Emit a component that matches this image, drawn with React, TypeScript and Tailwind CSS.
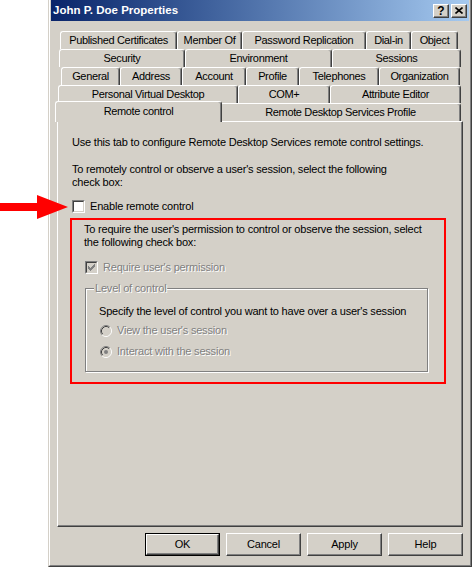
import React from 'react';

interface TabDef {
  label: string;
  w: number;
  selected?: boolean;
}

interface TabRow {
  offset: string;
  tabs: TabDef[];
}

const tabRows: TabRow[] = [
  {
    offset: 'ml-[3px]',
    tabs: [
      { label: 'Published Certificates', w: 117 },
      { label: 'Member Of', w: 65 },
      { label: 'Password Replication', w: 124 },
      { label: 'Dial-in', w: 45 },
      { label: 'Object', w: 47 },
    ],
  },
  {
    offset: 'ml-[2px]',
    tabs: [
      { label: 'Security', w: 126 },
      { label: 'Environment', w: 147 },
      { label: 'Sessions', w: 129 },
    ],
  },
  {
    offset: 'ml-[4px]',
    tabs: [
      { label: 'General', w: 59 },
      { label: 'Address', w: 62 },
      { label: 'Account', w: 64 },
      { label: 'Profile', w: 53 },
      { label: 'Telephones', w: 80 },
      { label: 'Organization', w: 81 },
    ],
  },
  {
    offset: 'ml-[1px]',
    tabs: [
      { label: 'Personal Virtual Desktop', w: 180 },
      { label: 'COM+', w: 92 },
      { label: 'Attribute Editor', w: 131 },
    ],
  },
  {
    offset: 'ml-0',
    tabs: [
      { label: 'Remote control', w: 163, selected: true },
      { label: 'Remote Desktop Services Profile', w: 241 },
    ],
  },
];

const disabledText = 'text-[#808080] [text-shadow:1px_1px_0_#ffffff]';

const Tab = ({ label, w, selected }: TabDef) => (
  <div
    style={{ width: selected ? w + 4 : w }}
    className={`flex shrink-0 items-center justify-center whitespace-nowrap rounded-t-[3px] border-l border-r border-t border-l-white border-r-[#404040] border-t-white bg-[#d4d0c8] shadow-[inset_-1px_0_0_#808080] ${
      selected ? 'relative z-10 -mx-[2px] -mt-[2px] h-[21px] pb-[2px]' : 'h-[18px]'
    }`}
  >
    {label}
  </div>
);

const CheckBox = ({ checked, disabled }: { checked?: boolean; disabled?: boolean }) => (
  <div className="h-[13px] w-[13px] shrink-0 border border-b-white border-l-[#808080] border-r-white border-t-[#808080]">
    <div
      className={`flex h-full w-full items-center justify-center border border-b-[#d4d0c8] border-l-[#404040] border-r-[#d4d0c8] border-t-[#404040] ${
        disabled ? 'bg-[#d4d0c8]' : 'bg-white'
      }`}
    >
      {checked && (
        <svg width="7" height="7" viewBox="0 0 7 7" shapeRendering="crispEdges">
          {[2, 3, 4, 3, 2, 1, 0].map((y, x) => (
            <rect key={x} x={x} y={y} width="1" height="3" fill={disabled ? '#808080' : '#000'} />
          ))}
        </svg>
      )}
    </div>
  </div>
);

const Radio = ({ checked }: { checked?: boolean }) => (
  <svg width="12" height="12" viewBox="0 0 12 12" className="shrink-0">
    <circle cx="6" cy="6" r="5.5" fill="#d4d0c8" />
    <path d="M2.11 9.89 A5.5 5.5 0 0 1 9.89 2.11" stroke="#808080" fill="none" />
    <path d="M9.89 2.11 A5.5 5.5 0 0 1 2.11 9.89" stroke="#ffffff" fill="none" />
    <path d="M2.82 9.18 A4.5 4.5 0 0 1 9.18 2.82" stroke="#404040" fill="none" />
    <path d="M9.18 2.82 A4.5 4.5 0 0 1 2.82 9.18" stroke="#d4d0c8" fill="none" />
    {checked && <circle cx="6" cy="6" r="2" fill="#808080" />}
  </svg>
);

const Button = ({ label, isDefault }: { label: string; isDefault?: boolean }) => (
  <div className={`h-[23px] w-[75px] ${isDefault ? 'border border-black' : ''}`}>
    <div className="flex h-full w-full items-center justify-center border border-b-[#404040] border-l-white border-r-[#404040] border-t-white bg-[#d4d0c8] shadow-[inset_-1px_-1px_0_#808080]">
      {label}
    </div>
  </div>
);

const TitleButton = ({ children }: { children: React.ReactNode }) => (
  <div className="flex h-[14px] w-[16px] items-center justify-center border border-b-[#404040] border-l-white border-r-[#404040] border-t-white bg-[#d4d0c8] shadow-[inset_-1px_-1px_0_#808080]">
    {children}
  </div>
);

export default function App() {
  return (
    <div className="relative h-[567px] w-[472px] overflow-hidden bg-white font-['Liberation_Sans',Arial,sans-serif] text-[11px] leading-[13px] tracking-[-0.2px] text-black">
      {/* red annotation arrow */}
      <svg className="absolute left-0 top-[193px]" width="70" height="28" viewBox="0 0 70 28">
        <polygon points="0,10 37,10 37,2 68,14 37,26 37,18 0,18" fill="#ff0000" />
      </svg>

      <div className="ml-[48px] flex h-[567px] w-[424px] flex-col border-b border-l border-r border-b-[#404040] border-l-[#d4d0c8] border-r-[#404040]">
        <div className="flex flex-1 flex-col border-b border-l border-r border-b-[#808080] border-l-white border-r-[#808080] bg-[#d4d0c8] px-px">
          {/* Title bar */}
          <div className="flex h-[21px] items-center bg-gradient-to-r from-[#0a246a] to-[#a6caf0] pl-[2px] pr-[2px]">
            <span className="flex-1 text-[11.5px] font-bold tracking-normal text-white">John P. Doe Properties</span>
            <div className="flex gap-[2px]">
              <TitleButton>
                <span className="text-[12px] font-bold leading-none tracking-normal">?</span>
              </TitleButton>
              <TitleButton>
                <svg width="8" height="7" viewBox="0 0 8 7">
                  <path d="M0.5 0.5 L7.5 6.5 M7.5 0.5 L0.5 6.5" stroke="#000" strokeWidth="1.6" />
                </svg>
              </TitleButton>
            </div>
          </div>

          <div className="flex flex-col px-[6px] pt-[10px]">
            {/* Tabs */}
            {tabRows.map((row, i) => (
              <div key={i} className={`flex h-[18px] tracking-[-0.35px] ${row.offset}`}>
                {row.tabs.map((t) => (
                  <Tab key={t.label} {...t} />
                ))}
              </div>
            ))}

            {/* Tab panel */}
            <div className="flex h-[406px] w-[406px] flex-col border border-b-[#404040] border-l-white border-r-[#404040] border-t-white pl-[14px] pt-[14px] shadow-[inset_-1px_-1px_0_#808080]">
              <p>Use this tab to configure Remote Desktop Services remote control settings.</p>
              <p className="mt-[14px]">
                To remotely control or observe a user's session, select the following
                <br />
                check box:
              </p>
              <div className="mt-[11px] flex h-[13px] items-center gap-[5px]">
                <CheckBox />
                <span>Enable remote control</span>
              </div>

              {/* red highlight */}
              <div className="-ml-[2px] mt-[5px] flex h-[166px] w-[376px] flex-col border-2 border-[#ff0000] pl-[12px] pt-[3px]">
                <p>
                  To require the user's permission to control or observe the session, select
                  <br />
                  the following check box:
                </p>
                <div className="ml-[1px] mt-[12px] flex h-[13px] items-center gap-[5px]">
                  <CheckBox checked disabled />
                  <span className={disabledText}>Require user's permission</span>
                </div>

                <div className="relative ml-[1px] mt-[14px] flex h-[84px] w-[343px] flex-col border border-[#808080] pl-[13px] pt-[16px] shadow-[inset_1px_1px_0_#ffffff,1px_1px_0_#ffffff]">
                  <span className={`absolute -top-[7px] left-[8px] bg-[#d4d0c8] px-[1px] ${disabledText}`}>
                    Level of control
                  </span>
                  <p>Specify the level of control you want to have over a user's session</p>
                  <div className="ml-[1px] mt-[6px] flex h-[13px] items-center gap-[5px]">
                    <Radio />
                    <span className={disabledText}>View the user's session</span>
                  </div>
                  <div className="ml-[1px] mt-[8px] flex h-[13px] items-center gap-[5px]">
                    <Radio checked />
                    <span className={disabledText}>Interact with the session</span>
                  </div>
                </div>
              </div>
            </div>

            {/* Buttons */}
            <div className="mt-[6px] flex justify-end gap-[6px]">
              <Button label="OK" isDefault />
              <Button label="Cancel" />
              <Button label="Apply" />
              <Button label="Help" />
            </div>
          </div>
        </div>
      </div>
    </div>
  );
}
